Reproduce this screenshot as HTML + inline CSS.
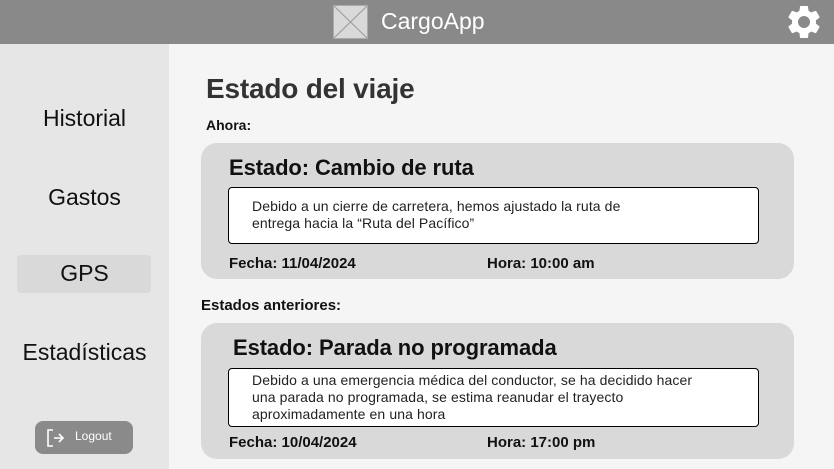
<!DOCTYPE html>
<html><head><meta charset="utf-8"><style>
*{margin:0;padding:0;box-sizing:border-box}
body{width:834px;height:469px;overflow:hidden;background:#f5f5f5;font-family:"Liberation Sans",sans-serif;position:relative;color:#111}
.a{position:absolute;white-space:nowrap;line-height:1}
#hd{position:absolute;left:0;top:0;width:834px;height:44px;background:#898989}
#sb{position:absolute;left:0;top:44px;width:169px;height:425px;background:#e6e6e6}
.nav{position:absolute;left:0;width:169px;text-align:center;font-size:23px;color:#111;line-height:1}
.card{position:absolute;left:201px;width:593px;height:136px;background:#d9d9d9;border-radius:16px}
.box{position:absolute;left:228px;width:531px;background:#fff;border:1px solid #000;border-radius:4px}
.t{font-size:22px;font-weight:bold;letter-spacing:-0.1px}
.d{font-size:14px;color:#222;line-height:17px;position:absolute;left:252px;white-space:nowrap;letter-spacing:0.1px}
.f{font-size:15px;font-weight:bold}
</style></head><body>
<div id="hd"></div>
<svg class="a" style="left:333px;top:5px" width="35" height="34"><rect x="0.5" y="0.5" width="34" height="33" fill="#d9d9d9" stroke="#aaa"/><path d="M1 1L34 33M34 1L1 33" stroke="#999" stroke-width="1"/></svg>
<div class="a" style="left:381px;top:10px;font-size:23px;color:#fff">CargoApp</div>
<svg class="a" style="left:784px;top:2px" width="40" height="40" viewBox="0 0 24 24"><path fill="#fff" d="M19.14 12.94c.04-.3.06-.61.06-.94s-.02-.64-.07-.94l2.03-1.58a.49.49 0 0 0 .12-.61l-1.920-3.32a.49.49 0 0 0-.59-.22l-2.39.96a7 7 0 0 0-1.62-.94l-.36-2.54a.48.48 0 0 0-.48-.41h-3.84a.48.48 0 0 0-.48.41l-.36 2.54c-.59.24-1.13.57-1.62.94l-2.39-.96a.48.48 0 0 0-.59.22L2.74 8.87a.48.48 0 0 0 .12.61l2.03 1.580c-.05.3-.09.63-.09.94s.02.64.07.94l-2.03 1.58a.49.49 0 0 0-.12.61l1.92 3.32c.12.22.37.29.59.22l2.39-.96c.5.38 1.030.7 1.62.94l.36 2.54c.05.24.24.41.48.41h3.84c.24 0 .44-.17.47-.41l.36-2.54c.59-.24 1.13-.56 1.62-.94l2.39.96c.22.08.47 0 .59-.22l1.92-3.32a.48.48 0 0 0-.12-.61l-2.01-1.58zM12 15.6A3.6 3.6 0 1 1 12 8.4a3.6 3.6 0 0 1 0 7.2z"/></svg>
<div id="sb"></div>
<div class="nav" style="top:107px">Historial</div>
<div class="nav" style="top:186px">Gastos</div>
<div class="a" style="left:17px;top:255px;width:134px;height:38px;background:#d9d9d9;border-radius:4px"></div>
<div class="nav" style="top:262px">GPS</div>
<div class="nav" style="top:341px">Estadísticas</div>
<div class="a" style="left:35px;top:421px;width:98px;height:33px;background:#8a8a8a;border-radius:8px"></div>
<svg class="a" style="left:46px;top:428px" width="20" height="20"><path d="M7 2H2V18H7M8 10H17M13 6L17 10L13 14" stroke="#fff" stroke-width="1.6" fill="none"/></svg>
<div class="a" style="left:75px;top:430px;font-size:12px;color:#fff">Logout</div>
<div class="a" style="left:206px;top:75px;font-size:28px;font-weight:bold;color:#333;letter-spacing:-0.2px">Estado del viaje</div>
<div class="a" style="left:206px;top:118px;font-size:14px;font-weight:bold">Ahora:</div>
<div class="card" style="top:143px"></div>
<div class="a t" style="left:229px;top:157px">Estado: Cambio de ruta</div>
<div class="box" style="top:187px;height:57px"></div>
<div class="d" style="top:198px">Debido a un cierre de carretera, hemos ajustado la ruta de<br>entrega hacia la “Ruta del Pacífico”</div>
<div class="a f" style="left:229px;top:256px">Fecha: 11/04/2024</div>
<div class="a f" style="left:487px;top:256px">Hora: 10:00 am</div>
<div class="a" style="left:201px;top:298px;font-size:15px;font-weight:bold">Estados anteriores:</div>
<div class="card" style="top:323px"></div>
<div class="a t" style="left:233px;top:337px">Estado: Parada no programada</div>
<div class="box" style="top:368px;height:59px"></div>
<div class="d" style="top:372px">Debido a una emergencia médica del conductor, se ha decidido hacer<br>una parada no programada, se estima reanudar el trayecto<br>aproximadamente en una hora</div>
<div class="a f" style="left:229px;top:435px">Fecha: 10/04/2024</div>
<div class="a f" style="left:487px;top:435px">Hora: 17:00 pm</div>
</body></html>
